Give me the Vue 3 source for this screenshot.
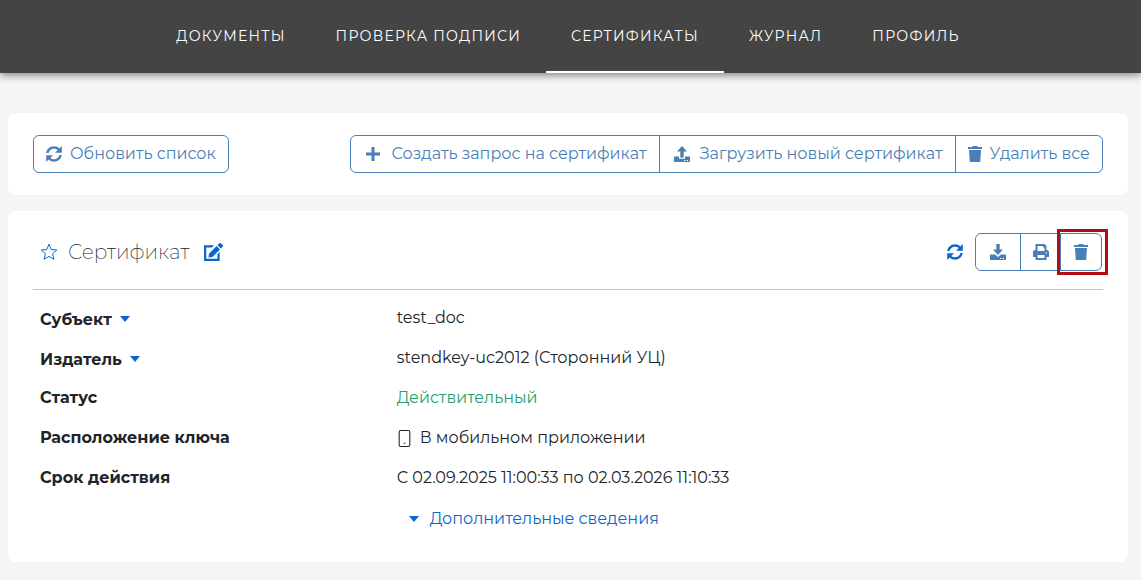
<script setup>
const nav = [
  { id: 'docs', label: 'Документы' },
  { id: 'verify', label: 'Проверка подписи' },
  { id: 'certs', label: 'Сертификаты', active: true },
  { id: 'log', label: 'Журнал' },
  { id: 'profile', label: 'Профиль' },
]

const icons = {
  sync: 'M.2 7C.8 3.100 4 .3 8 .3C10.100 .3 12 1.100 13.400 2.400L15.800 0V6.800H9L11.700 4.100C10.700 3.200 9.400 2.700 8 2.700C5.300 2.700 3.200 4.400 2.600 7ZM15.800 9C15.200 12.900 12 15.700 8 15.700C5.900 15.700 4 14.900 2.600 13.600L.2 16V9.200H7L4.300 11.900C5.300 12.800 6.600 13.300 8 13.300C10.700 13.300 12.800 11.600 13.400 9Z',
  plus: 'M6.500 1H9.500V6.500H15V9.500H9.500V15H6.500V9.500H1V6.500H6.500Z',
  upload: 'M8 0L13 5.500H9.700V11.500H6.300V5.500H3ZM0 10.500H5V12.700H11V10.500H16V16H0ZM10 14V15H11.300V14ZM12.600 14V15H14V14Z',
  download: 'M6.300 0H9.700V5.500H13L8 11L3 5.500H6.300ZM0 10.500H5L8 13L11 10.500H16V16H0ZM10 14V15H11.300V14ZM12.600 14V15H14V14Z',
  trash: 'M1 1H5L6 0H10L11 1H15V3H1ZM2 4H14L13.200 16H2.800Z',
  print: 'M2.500 0H11.500L13.500 2V6H14.500L16 7.500V13H13.500V16H2.500V13H0V7.500L1.500 6H2.500ZM4.500 2V7H11.500V3.500H10V2ZM4.500 11V14H11.500V11ZM12.500 8.200V9.600H13.900V8.200Z',
  edit: 'M0 2H9L7 4H2V14H12V10L14 8V16H0ZM11.300 2.700L14.300 5.700L7.500 12.500L4 13L4.500 9.500ZM12.100 1.900L13.600 .4C14.100 -.1 14.800 -.1 15.300 .4L16.600 1.700C17.100 2.200 17.100 2.900 16.600 3.400L15.100 4.900Z',
}

const actions = [
  { icon: 'plus', label: 'Создать запрос на сертификат', wide: true },
  { icon: 'upload', label: 'Загрузить новый сертификат', wide: true },
  { icon: 'trash', label: 'Удалить все' },
]

const tools = [
  { icon: 'download', label: 'Скачать' },
  { icon: 'print', label: 'Печать' },
  { icon: 'trash', label: 'Удалить', marked: true },
]

const rows = [
  { label: 'Субъект', value: 'test_doc', expandable: true },
  { label: 'Издатель', value: 'stendkey-uc2012 (Сторонний УЦ)', expandable: true },
  { label: 'Статус', value: 'Действительный', state: 'ok' },
  { label: 'Расположение ключа', value: 'В мобильном приложении', phone: true },
  { label: 'Срок действия', value: 'С 02.09.2025 11:00:33 по 02.03.2026 11:10:33' },
]
</script>

<template>
  <div class="page">
    <header class="topbar">
      <nav class="nav">
        <a v-for="item in nav" :key="item.id" :href="'#' + item.id" class="nav-link" :class="{ active: item.active }">{{ item.label }}</a>
      </nav>
    </header>

    <main class="content">
      <section class="card toolbar">
        <button type="button" class="btn refresh">
          <svg class="icon" viewBox="0 0 16 16" aria-hidden="true"><path :d="icons.sync" /></svg>
          <span>Обновить список</span>
        </button>
        <div class="group">
          <button v-for="a in actions" :key="a.icon" type="button" class="btn">
            <svg class="icon" :class="a.wide ? 'wide' : 'narrow'" viewBox="0 0 16 16" :preserveAspectRatio="a.wide ? 'xMidYMid meet' : 'xMidYMid slice'" aria-hidden="true"><path fill-rule="evenodd" :d="icons[a.icon]" /></svg>
            <span>{{ a.label }}</span>
          </button>
        </div>
      </section>

      <section class="card certificate">
        <div class="cert-head">
          <button type="button" class="plain" aria-label="В избранное">
            <svg class="star" viewBox="0 0 18 18" aria-hidden="true"><path d="M9 1.200L11.200 6.500L16.800 7L12.600 10.700L13.900 16.300L9 13.400L4.100 16.300L5.400 10.700L1.200 7L6.800 6.500Z" /></svg>
          </button>
          <h2 class="title">Сертификат</h2>
          <button type="button" class="plain" aria-label="Изменить">
            <svg class="edit" viewBox="0 0 17 16" aria-hidden="true"><path fill-rule="evenodd" :d="icons.edit" /></svg>
          </button>
          <div class="cert-tools">
            <button type="button" class="plain" aria-label="Обновить">
              <svg class="icon" viewBox="0 0 16 16" aria-hidden="true"><path :d="icons.sync" /></svg>
            </button>
            <div class="group small">
              <button v-for="t in tools" :key="t.icon" type="button" class="btn" :class="[t.icon, { marked: t.marked }]" :aria-label="t.label">
                <svg class="icon" viewBox="0 0 16 16" aria-hidden="true"><path fill-rule="evenodd" :d="icons[t.icon]" /></svg>
              </button>
            </div>
          </div>
        </div>

        <dl class="details">
          <div v-for="row in rows" :key="row.label" class="row">
            <dt>
              <button v-if="row.expandable" type="button" class="plain toggle">{{ row.label }}<span class="caret"></span></button>
              <template v-else>{{ row.label }}</template>
            </dt>
            <dd :class="row.state">
              <svg v-if="row.phone" class="phone" viewBox="0 0 12 16" aria-hidden="true"><rect x="1" y=".5" width="10" height="15" rx="1.500" /><path d="M5.300 12.500h1.400" /></svg>
              {{ row.value }}
            </dd>
          </div>
        </dl>
        <div class="row more-row">
          <button type="button" class="plain more"><span class="caret"></span>Дополнительные сведения</button>
        </div>
      </section>
    </main>
  </div>
</template>

<style>
body {
  background: #f5f5f5;
}
</style>

<style scoped>
.page {
  color: #212529;
  font: 400 16px/24px Montserrat, Inter, "Liberation Sans", sans-serif;
}
.topbar {
  background: #444;
  box-shadow: 0 2px 8px rgba(0, 0, 0, 0.5);
  padding-right: 5px;
}
.nav {
  display: flex;
  justify-content: center;
}
.nav-link {
  padding: 24px 25px 23px;
  border-bottom: 2px solid transparent;
  color: #fff;
  font-size: 14px;
  letter-spacing: 0.09em;
  text-transform: uppercase;
  text-decoration: none;
}
.nav-link.active {
  border-color: #fff;
}
.content {
  display: grid;
  gap: 16px;
  padding: 40px 13px 18px 8px;
}
.card {
  background: #fff;
  border-radius: 8px;
  padding: 22px 25px;
}
.toolbar {
  display: flex;
  justify-content: space-between;
}
.btn {
  display: flex;
  align-items: center;
  justify-content: center;
  gap: 8px;
  height: 38px;
  box-sizing: border-box;
  padding: 0 12px;
  border: 1px solid #4a7fb5;
  background: #fff;
  color: #4a7fb5;
  font: inherit;
}
.refresh {
  border-radius: 6px;
}
.icon {
  width: 16px;
  height: 16px;
  fill: currentColor;
}
.icon.wide {
  width: 20px;
}
.icon.narrow {
  width: 14px;
}
.group {
  display: flex;
}
.group .btn + .btn {
  margin-left: -1px;
}
.group .btn:first-child {
  border-radius: 6px 0 0 6px;
}
.group .btn:last-child {
  border-radius: 0 6px 6px 0;
}
.plain {
  display: flex;
  align-items: center;
  padding: 0;
  border: 0;
  background: none;
  color: #0a66cc;
  font: inherit;
}
.certificate {
  padding-bottom: 23px;
}
.cert-head {
  display: flex;
  align-items: center;
  padding: 0 1px 18px 7px;
  border-bottom: 1px solid #c4c4c4;
}
.star {
  width: 18px;
  height: 18px;
  fill: none;
  stroke: currentColor;
}
.title {
  margin: 0 15px 0 10px;
  font-size: 20px;
  font-weight: 200;
}
.edit {
  width: 19px;
  height: 18px;
  fill: currentColor;
}
.cert-tools {
  display: flex;
  align-items: center;
  gap: 12px;
  margin-left: auto;
}
.small .btn {
  position: relative;
  padding: 0;
}
.small .download {
  width: 46px;
}
.small .print {
  width: 41px;
}
.small .trash {
  width: 42px;
}
.marked::after {
  content: "";
  position: absolute;
  inset: -5px -7px -5px -4px;
  border: 3px solid #b30d12;
}
.details {
  margin: 0;
  padding-top: 8px;
}
.row {
  display: grid;
  grid-template-columns: 1fr 2fr;
  align-items: center;
  min-height: 40px;
}
.more-row {
  padding-top: 1px;
}
dt {
  padding-left: 7px;
  font-weight: 700;
}
dd {
  display: flex;
  align-items: center;
  gap: 8px;
  margin: 0;
  padding-left: 7px;
}
dd.ok {
  color: #2a9d6e;
}
.toggle {
  padding-top: 4px;
  color: #212529;
}
.caret {
  margin-left: 8px;
  border: 5px solid transparent;
  border-top: 6px solid #0a66cc;
  border-bottom: 0;
}
.toggle .caret {
  margin-bottom: 2px;
}
.phone {
  width: 15px;
  height: 17px;
  fill: none;
  stroke: #212529;
}
.more {
  grid-column: 2;
  justify-self: start;
  padding-left: 11px;
  gap: 11px;
}
</style>
